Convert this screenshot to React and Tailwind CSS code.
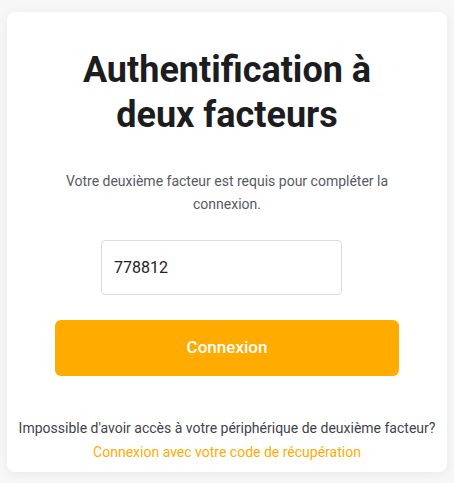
export default function App() {
  return (
    <div className="min-h-screen bg-[#f7f7f7] pt-3 pl-[7px]" style={{ fontFamily: 'Roboto, "Liberation Sans", sans-serif' }}>
      <div className="w-[440px] h-[460px] bg-white rounded-lg shadow-[0_2px_12px_rgba(0,0,0,0.06)] flex flex-col items-center pt-9">
        <h1 className="text-[36px] leading-[45px] font-bold text-[#1c1d20] text-center w-[320px]">
          Authentification à deux facteurs
        </h1>
        <p className="mt-8 w-[340px] text-[14px] leading-[23px] text-[#555a63] text-center">
          Votre deuxième facteur est requis pour compléter la connexion.
        </p>
        <input
          type="text"
          defaultValue="778812"
          className="mt-6 mr-[11px] w-[241px] h-[55px] border border-[#dcdcdc] rounded px-3 text-[16px] text-[#222] outline-none"
        />
        <button className="mt-[25px] w-[344px] h-[56px] bg-[#ffab00] rounded-md text-white text-[17px] font-medium">
          Connexion
        </button>
        <div className="mt-10 text-center text-[14px] leading-6">
          <p className="text-[#3f434a]">Impossible d'avoir accès à votre périphérique de deuxième facteur?</p>
          <a className="text-[#ffab00]">Connexion avec votre code de récupération</a>
        </div>
      </div>
    </div>
  );
}
